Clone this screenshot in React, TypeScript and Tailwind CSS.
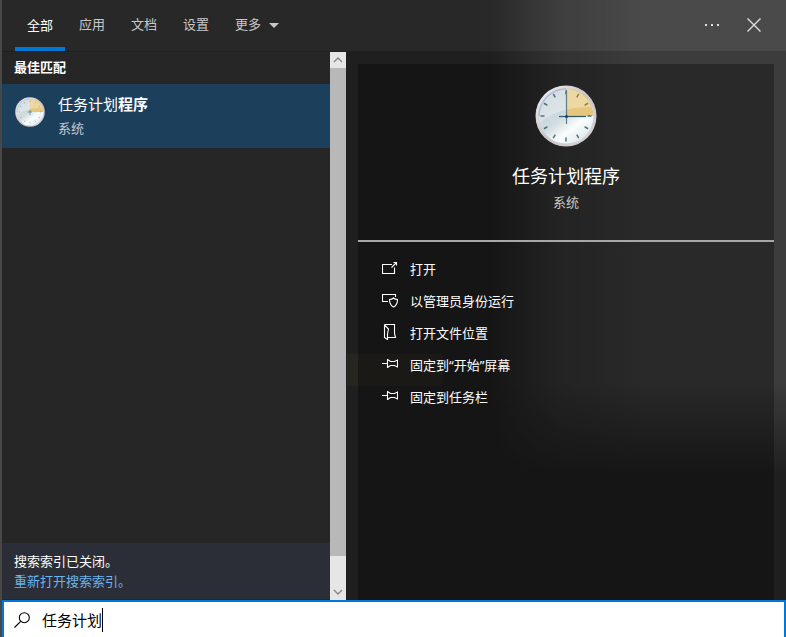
import type { ReactNode } from "react";

const tabs = ["全部", "应用", "文档", "设置"];

const ClockIcon = ({ className, small }: { className: string; small?: boolean }) => {
  const id = small ? "small" : "large";
  return (
    <svg viewBox="0 0 62 62" className={className} aria-hidden="true">
      <defs>
        <linearGradient id={`rim-${id}`} x1="0" y1="0" x2="1" y2="1">
          <stop offset="0" stopColor="#f4f2f4" />
          <stop offset="0.5" stopColor="#c9c4ca" />
          <stop offset="1" stopColor="#dcd7da" />
        </linearGradient>
        <linearGradient id={`face-${id}`} x1="0.2" y1="0.2" x2="0.75" y2="0.9">
          <stop offset="0" stopColor="#c6d2d7" />
          <stop offset="0.45" stopColor="#d0dcdf" />
          <stop offset="0.75" stopColor="#fafdfd" />
          <stop offset="1" stopColor="#e6eff1" />
        </linearGradient>
      </defs>
      <circle cx="31" cy="31" r="30.5" fill={`url(#rim-${id})`} />
      <circle cx="31" cy="31" r="27.5" fill={`url(#face-${id})`} />
      <path d="M31 31V3.500A27.500 27.500 0 0 1 58.500 31Z" fill="#e6c67c" />
      <path d="M4 34A27 27 0 0 1 31 4A27 27 0 0 1 56 22C36 22 18 26 5 38Z" fill="#fff" opacity="0.3" />
      <path d="M4 31A27 27 0 0 1 31 4" fill="none" stroke="#a9bfda" strokeWidth="1.500" />
      <g stroke="#4d7283" strokeWidth={small ? 1.6 : 1.5} opacity={small ? 0.7 : 1}>
        {[0, 30, 60, 90, 120, 150, 180, 210, 240, 270, 300, 330].map((deg) => (
          <path
            key={deg}
            d={small ? "M31 8v2" : "M31 5.500v4"}
            stroke={deg === 30 || deg === 60 ? "#8d8055" : undefined}
            transform={`rotate(${deg} 31 31)`}
          />
        ))}
      </g>
      {small ? (
        <path d="M31 26v11M26 31h9" stroke="#5e7d8a" strokeWidth="1.500" />
      ) : (
        <>
          <path d="M31.500 5v34" stroke="#607c88" strokeWidth="1.200" />
          <path d="M24 31.500h27" stroke="#30566e" strokeWidth="1.200" />
          <circle cx="31.500" cy="31.500" r="1.500" fill="#1e445e" />
        </>
      )}
    </svg>
  );
};

const ActionIcon = ({ children }: { children: ReactNode }) => (
  <svg
    viewBox="0 0 16 16"
    className="mb-1 size-4 shrink-0"
    fill="none"
    stroke="currentColor"
    strokeWidth="1.100"
    aria-hidden="true"
  >
    {children}
  </svg>
);

const PinIcon = () => (
  <ActionIcon>
    <path d="M0 7.500h5M5.500 3v9M5.500 3.500L8.500 5.500H12.500L15.500 4V11L12.500 9.500H8.500L5.500 11.500" />
  </ActionIcon>
);

const actions = [
  {
    label: "打开",
    icon: (
      <ActionIcon>
        <path d="M10 4.500H.500v9h12V7.500M9.500 7.500L14.500 2.500M11.500 2.500h3v3" />
      </ActionIcon>
    ),
  },
  {
    label: "以管理员身份运行",
    icon: (
      <ActionIcon>
        <path d="M6 9.500H.500V2.500h13V5M7.500 7.500C9.500 7.500 10.500 7 11.500 6C12.500 7 13.500 7.500 15.500 7.500C15.500 11 14.500 13.500 11.500 15C8.500 13.500 7.500 11 7.500 7.500Z" />
      </ActionIcon>
    ),
  },
  {
    label: "打开文件位置",
    icon: (
      <ActionIcon>
        <path d="M2.500 .500H12.500V9.500L13.500 13.500H5.500M2.500 .500V13.500L5.500 15.500V10L6.500 5L2.500 1" />
      </ActionIcon>
    ),
  },
  { label: "固定到“开始”屏幕", icon: <PinIcon /> },
  { label: "固定到任务栏", icon: <PinIcon /> },
];

const Header = () => (
  <header className="flex h-[52px] shrink-0 items-stretch justify-between border-b border-black/20 bg-linear-to-r from-white/4 from-60% to-white/7 to-80% pl-[13px]">
    <nav className="flex gap-0.5">
      {tabs.map((tab, i) => (
        <button
          key={tab}
          className={
            i === 0
              ? "border-b-4 border-[#0078d7] px-3 pt-1 text-white"
              : "px-3 pb-0.5 text-[#c8c8c8]"
          }
        >
          {tab}
        </button>
      ))}
      <button className="flex items-center gap-2 px-3 pb-0.5 text-[#c8c8c8]">
        更多
        <svg viewBox="0 0 10 5" className="mt-0.5 h-[5px] w-2.5" fill="currentColor" aria-hidden="true">
          <path d="M0 0h10L5 5z" />
        </svg>
      </button>
    </nav>
    <div className="flex items-center gap-2.5 pb-0.5 pr-4 text-[#dedede]">
      <button aria-label="选项" className="flex size-8 items-center justify-center">
        <svg viewBox="0 0 16 16" className="size-4" fill="currentColor" aria-hidden="true">
          <path d="M1 7h2v2H1zM7 7h2v2H7zM13 7h2v2h-2z" />
        </svg>
      </button>
      <button aria-label="关闭" className="flex size-8 items-center justify-center">
        <svg viewBox="0 0 14 14" className="size-3.5" fill="none" stroke="currentColor" strokeWidth="1.400" aria-hidden="true">
          <path d="M.500 .500l13 13M13.500 .500l-13 13" />
        </svg>
      </button>
    </div>
  </header>
);

const ResultList = () => (
  <section className="flex w-[328px] shrink-0 flex-col bg-[#262626]">
    <h2 className="flex h-8 items-center pl-3 font-bold">最佳匹配</h2>
    <button className="flex h-16 items-start gap-3 bg-[#1c3f5c] pl-3 pt-3 text-left">
      <ClockIcon className="size-8 shrink-0 p-px" small />
      <span className="flex flex-col">
        <span className="-mt-0.5 text-[15px] leading-5">
          任务计划<b>程序</b>
        </span>
        <span className="mt-1 leading-5 text-[#c3ccd3]">系统</span>
      </span>
    </button>
    <div className="mb-px mt-auto bg-[#2b2e37] py-2 pl-3 leading-5">
      <p>搜索索引已关闭。</p>
      <a href="#index" className="block text-[#6db3ec]">
        重新打开搜索索引。
      </a>
    </div>
  </section>
);

const ScrollBar = () => (
  <div className="flex w-4 shrink-0 flex-col bg-[#e6e6e6] text-[#858585]" aria-hidden="true">
    <svg viewBox="0 0 16 16" className="size-4" fill="none" stroke="currentColor" strokeWidth="1.300">
      <path d="M4 10l4-4 4 4" />
    </svg>
    <div className="grow bg-[#b8b8b8]" />
    <svg viewBox="0 0 16 16" className="mt-7 size-4" fill="none" stroke="currentColor" strokeWidth="1.300">
      <path d="M4 6l4 4 4-4" />
    </svg>
  </div>
);

const Details = () => (
  <section className="flex min-w-0 flex-1 flex-col px-3 pt-3">
    <div className="grow bg-black/30">
      <div className="flex h-[178px] flex-col items-center border-b-2 border-[#a8a8a8] pt-5">
        <ClockIcon className="size-16 p-px" />
        <h1 className="mt-3.5 text-[18px] leading-7">任务计划程序</h1>
        <p className="mt-0.5 leading-5 text-[#c8c8c8]">系统</p>
      </div>
      <ul className="pt-3">
        {actions.map(({ label, icon }) => (
          <li key={label}>
            <button className="flex h-8 w-full items-center gap-3 pl-6 text-left">
              {icon}
              {label}
            </button>
          </li>
        ))}
      </ul>
    </div>
  </section>
);

const SearchBox = () => (
  <label className="flex h-[37px] shrink-0 items-center border-2 border-b-0 border-[#0078d7] bg-white pl-2.5 text-[15px] text-black">
    <svg viewBox="0 0 16 16" className="size-4" fill="none" stroke="currentColor" strokeWidth="1.100" aria-hidden="true">
      <circle cx="10.300" cy="5.700" r="5" />
      <path d="M6.700 9.300L.500 15.500" />
    </svg>
    <input
      aria-label="搜索"
      defaultValue="任务计划"
      className="ml-3 field-sizing-content leading-6 caret-transparent outline-none"
    />
    <span className="h-6 w-px bg-black" />
  </label>
);

export default function App() {
  return (
    <main className="relative isolate flex h-screen flex-col overflow-hidden border-l-2 border-[#484848] bg-[#1f1f1f] font-['Noto_Sans','Noto_Sans_CJK_SC',sans-serif] text-[13px] text-white">
      {/* soft light behind the acrylic */}
      <div className="absolute inset-0 -z-10 bg-linear-to-r from-transparent from-62% via-white/9 via-71% to-white/13 to-82% mask-b-from-60% mask-b-to-75%" />
      <div className="absolute left-[345px] top-[354px] -z-10 h-8 w-24 bg-yellow-300/3" />
      <Header />
      <div className="flex min-h-0 grow">
        <ResultList />
        <ScrollBar />
        <Details />
      </div>
      <SearchBox />
    </main>
  );
}
